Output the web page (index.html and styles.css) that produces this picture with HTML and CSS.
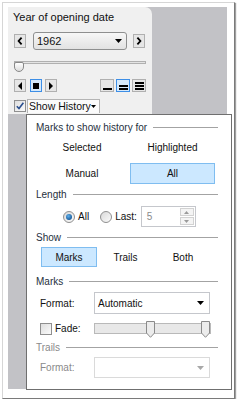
FILE: index.html
```html
<!DOCTYPE html>
<html>
<head>
<meta charset="utf-8">
<link rel="stylesheet" href="styles.css">
</head>
<body>
<div class="frame">
  <div class="canvas">
    <div class="card">
      <div class="title">Year of opening date</div>
      <div class="navrow">
        <div class="sqbtn"><svg width="6" height="8" viewBox="0 0 6 8"><path d="M4.6 0.6L1.6 4L4.6 7.4" stroke="#000" stroke-width="1.8" fill="none"/></svg></div>
        <div class="combo"><span>1962</span><svg width="7" height="4" viewBox="0 0 7 4"><path d="M0 0H7L3.5 4Z" fill="#000"/></svg></div>
        <div class="sqbtn"><svg width="6" height="8" viewBox="0 0 6 8"><path d="M1.4 0.6L4.4 4L1.4 7.4" stroke="#000" stroke-width="1.8" fill="none"/></svg></div>
      </div>
      <div class="slider">
        <div class="track"></div>
        <div class="thumb"></div>
      </div>
      <div class="prow">
        <div class="pgroup">
          <div class="pbtn"><svg width="4" height="8" viewBox="0 0 4 8"><path d="M4 0V8L0 4Z" fill="#000"/></svg></div>
          <div class="pbtn sel"><svg width="6" height="6" viewBox="0 0 6 6"><rect width="6" height="6" fill="#000"/></svg></div>
          <div class="pbtn"><svg width="4" height="8" viewBox="0 0 4 8"><path d="M0 0V8L4 4Z" fill="#000"/></svg></div>
        </div>
        <div class="sgroup">
          <div class="spbtn"><svg width="9" height="8" viewBox="0 0 9 8"><rect y="6" width="9" height="2" fill="#000"/></svg></div>
          <div class="spbtn sel"><svg width="9" height="8" viewBox="0 0 9 8"><rect y="3" width="9" height="2" fill="#000"/><rect y="6" width="9" height="2" fill="#000"/></svg></div>
          <div class="spbtn"><svg width="9" height="8" viewBox="0 0 9 8"><rect y="0" width="9" height="2" fill="#000"/><rect y="3" width="9" height="2" fill="#000"/><rect y="6" width="9" height="2" fill="#000"/></svg></div>
        </div>
      </div>
      <div class="histrow">
        <div class="check"><svg width="10" height="10" viewBox="0 0 10 10"><path d="M1.8 5.2L4 7.6L8.4 1.8" stroke="#2b4f8e" stroke-width="1.6" fill="none"/></svg></div>
        <div class="histbtn"><span class="histtxt">Show History</span><svg width="5" height="3" viewBox="0 0 5 3"><path d="M0 0H5L2.5 3Z" fill="#000"/></svg></div>
      </div>
    </div>
    <div class="popup">
      <div class="hdr">Marks to show history for</div>
      <div class="opts">
        <div class="opt">Selected</div>
        <div class="opt">Highlighted</div>
      </div>
      <div class="opts row2">
        <div class="opt">Manual</div>
        <div class="opt on">All</div>
      </div>
      <div class="hdr">Length</div>
      <div class="radiorow">
        <div class="radio on"></div><span class="rlab">All</span>
        <div class="radio r2"></div><span class="rlab">Last:</span>
        <div class="spin"><span>5</span>
          <div class="spinbtns">
            <div class="sb"><svg width="5" height="3" viewBox="0 0 5 3"><path d="M0 3H5L2.5 0Z" fill="#9a9a9a"/></svg></div>
            <div class="sb"><svg width="5" height="3" viewBox="0 0 5 3"><path d="M0 0H5L2.5 3Z" fill="#9a9a9a"/></svg></div>
          </div>
        </div>
      </div>
      <div class="hdr">Show</div>
      <div class="showrow">
        <div class="opt on">Marks</div>
        <div class="opt">Trails</div>
        <div class="opt">Both</div>
      </div>
      <div class="hdr">Marks</div>
      <div class="frow">
        <span class="flab">Format:</span>
        <div class="fcombo"><span>Automatic</span><svg width="7" height="4" viewBox="0 0 7 4"><path d="M0 0H7L3.5 4Z" fill="#000"/></svg></div>
      </div>
      <div class="faderow">
        <div class="check"></div>
        <span class="fadelab">Fade:</span>
        <div class="fslider">
          <div class="fthumb t1"><svg width="9" height="17" viewBox="0 0 9 17"><path d="M0.5 0.5H8.5V12L4.5 16.3L0.5 12Z" fill="#ececec" stroke="#8a8a8a"/></svg></div>
          <div class="fthumb t2"><svg width="9" height="17" viewBox="0 0 9 17"><path d="M0.5 0.5H8.5V12L4.5 16.3L0.5 12Z" fill="#ececec" stroke="#8a8a8a"/></svg></div>
        </div>
      </div>
      <div class="hdr dis">Trails</div>
      <div class="frow dis">
        <span class="flab">Format:</span>
        <div class="fcombo"><span></span><svg width="7" height="4" viewBox="0 0 7 4"><path d="M0 0H7L3.5 4Z" fill="#a8a8a8"/></svg></div>
      </div>
    </div>
  </div>
</div>
</body>
</html>
```
FILE: styles.css
```css
* { box-sizing: border-box; }
body {
  margin: 0;
  background: #fff;
  font-family: "Liberation Sans", Arial, sans-serif;
  color: #111;
}
.frame {
  margin: 2px 0 0 2px;
  width: 233px;
  height: 397px;
  border: 1px solid #d6d6d6;
  border-right-color: #7a7a7a;
  border-bottom-color: #7a7a7a;
  box-shadow: 1px 1px 1px #a0a0a0;
  padding: 4px 0 0 5px;
}
.canvas {
  width: 219px;
  height: 382px;
  background: #c2c2c6;
}
.card {
  width: 144px;
  height: 107px;
  background: #f0f0f0;
  border-top-right-radius: 7px;
  padding: 3px 6px 0 6px;
}
.title {
  font-size: 11px;
  line-height: 14px;
  height: 14px;
  margin-left: -1px;
  color: #111;
  white-space: nowrap;
}
.navrow {
  display: flex;
  align-items: center;
  height: 18px;
  margin-top: 8px;
}
.sqbtn {
  width: 12px;
  height: 14px;
  border: 1px solid #b0b0b0;
  background: #e6e6e6;
  display: flex;
  align-items: center;
  justify-content: center;
}
.combo {
  width: 94px;
  height: 18px;
  margin: 0 6px 0 7px;
  border: 1px solid #8e8f8f;
  border-radius: 3px;
  background: linear-gradient(#f7f7f7, #e2e2e2);
  display: flex;
  align-items: center;
  justify-content: space-between;
  padding: 0 4px 0 3px;
  font-size: 11px;
}
.slider {
  position: relative;
  height: 14px;
  width: 132px;
  margin-top: 8px;
}
.track {
  position: absolute;
  left: 0;
  right: 0;
  top: 3px;
  height: 3px;
  border: 1px solid #b0b0b0;
  background: #e4e4e4;
}
.thumb {
  position: absolute;
  left: 0;
  top: 4px;
  width: 10px;
  height: 10px;
  border: 1px solid #888;
  border-radius: 2px 2px 5px 5px;
  background: linear-gradient(#ffffff, #dcdcdc);
}
.prow {
  display: flex;
  justify-content: space-between;
  align-items: center;
  height: 13px;
  margin-top: 7px;
}
.pgroup, .sgroup {
  display: flex;
  align-items: center;
}
.pbtn {
  width: 12px;
  height: 13px;
  border: 1px solid #b0b0b0;
  background: #e6e6e6;
  display: flex;
  align-items: center;
  justify-content: center;
}
.pbtn + .pbtn { margin-left: 3px; }
.pgroup .pbtn.sel { margin-left: 4px; }
.spbtn {
  width: 14px;
  height: 13px;
  border: 1px solid #b0b0b0;
  background: #e6e6e6;
  display: flex;
  align-items: flex-end;
  justify-content: center;
  padding-bottom: 1px;
}
.spbtn + .spbtn { margin-left: 2px; }
.sel {
  border-color: #3d8ee6;
  background: #d5e9fb;
}
.histrow {
  display: flex;
  align-items: center;
  height: 14px;
  margin-top: 7px;
}
.check {
  width: 12px;
  height: 12px;
  flex: none;
  border: 1px solid #8f8f8f;
  background: linear-gradient(135deg, #dedede, #fbfbfb);
  display: flex;
  align-items: center;
  justify-content: center;
}
.histbtn {
  margin-left: 1px;
  width: 73px;
  height: 14px;
  border: 1px solid #b4b4b4;
  border-bottom: none;
  background: #fbfbfb;
  display: flex;
  align-items: center;
  justify-content: space-between;
  padding: 0 3px 0 1px;
  font-size: 10.5px;
  white-space: nowrap;
}
.histtxt {
  line-height: 13px;
}
.popup {
  margin-left: 18px;
  width: 206px;
  height: 276px;
  background: #fff;
  border: 1px solid #6f6f6f;
  padding: 5px 13px 0 9px;
  font-size: 10px;
}
.hdr {
  display: flex;
  align-items: center;
  height: 15px;
  line-height: 15px;
  gap: 6px;
  color: #26303e;
  white-space: nowrap;
}
.hdr::after {
  content: "";
  flex: 1;
  border-top: 1px solid #a3a3a3;
}
.hdr.dis { color: #8a8a8a; }
.opts {
  display: grid;
  grid-template-columns: 82px 85px;
  column-gap: 7px;
  margin-left: 5px;
  height: 15px;
  margin-top: 5px;
}
.opt {
  display: flex;
  align-items: center;
  justify-content: center;
  line-height: 15px;
}
.opts.row2 {
  height: 21px;
  margin-top: 8px;
  margin-bottom: 3px;
}
.opt.on {
  background: #cce8ff;
  border: 1px solid #7fbdf0;
}
.radiorow {
  display: flex;
  align-items: center;
  height: 21px;
  margin-top: 4px;
  margin-bottom: 3px;
  padding-left: 27px;
}
.radio {
  width: 12px;
  height: 12px;
  border-radius: 50%;
  border: 1px solid #8f8f8f;
  background: linear-gradient(135deg, #d9d9d9, #fbfbfb);
  display: flex;
  align-items: center;
  justify-content: center;
}
.radio.on::after {
  content: "";
  width: 6px;
  height: 6px;
  border-radius: 50%;
  background: radial-gradient(circle at 40% 35%, #5fb0ec, #1c5f9e 70%);
}
.radio.r2 { margin-left: 11px; }
.rlab { margin-left: 3px; }
.spin {
  margin-left: 4px;
  width: 55px;
  height: 21px;
  border: 1px solid #c5c7cc;
  display: flex;
  align-items: center;
  justify-content: space-between;
  padding: 0 1px 0 5px;
  color: #8a8a8a;
}
.spinbtns {
  display: flex;
  flex-direction: column;
  gap: 1px;
}
.sb {
  width: 14px;
  height: 8px;
  border: 1px solid #d2d2d2;
  background: #f4f4f4;
  display: flex;
  align-items: center;
  justify-content: center;
}
.showrow {
  display: grid;
  grid-template-columns: 56px 57px 58px;
  margin-left: 5px;
  height: 20px;
  margin-top: 2px;
  margin-bottom: 7px;
}
.frow {
  display: flex;
  align-items: center;
  height: 22px;
  margin-top: 3px;
  padding-left: 4px;
}
.flab {
  width: 54px;
}
.fcombo {
  width: 116px;
  height: 22px;
  border: 1px solid #c5c7cc;
  background: #fff;
  display: flex;
  align-items: center;
  justify-content: space-between;
  padding: 0 5px 0 3px;
}
.frow.dis { margin-top: 2px; height: 21px; }
.frow.dis .flab { color: #8a8a8a; }
.frow.dis .fcombo { height: 21px; border-color: #dadada; }
.faderow {
  display: flex;
  align-items: center;
  height: 15px;
  margin-top: 7px;
  margin-bottom: 4px;
  padding-left: 4px;
}
.fadelab {
  margin-left: 3px;
  width: 39px;
}
.fslider {
  position: relative;
  width: 117px;
  height: 11px;
  border: 1px solid #b9b9b9;
  background: #e8e8e8;
}
.fthumb {
  position: absolute;
  top: -3px;
  display: flex;
}
.t1 { left: 51px; }
.t2 { left: 106px; }
```
